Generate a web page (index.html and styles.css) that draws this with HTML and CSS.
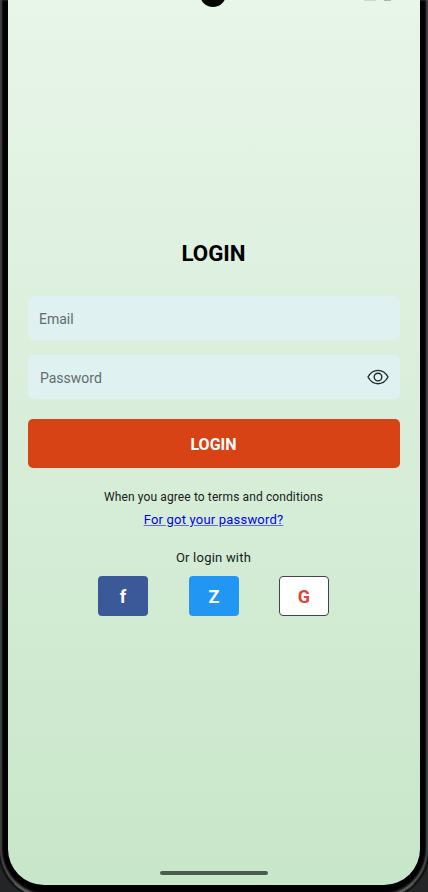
FILE: index.html
```html
<!DOCTYPE html>
<html lang="en">
<head>
<meta charset="utf-8">
<title>Login</title>
<link rel="stylesheet" href="styles.css">
</head>
<body>
<div class="device">
  <div class="bezel">
    <main class="screen">
      <div class="camera"></div>
      <div class="status"><i class="signal"></i><i class="battery"></i></div>
      <h1 class="title">LOGIN</h1>
      <div class="field email"><span>Email</span></div>
      <div class="field">
        <span>Password</span>
        <svg class="eye" viewBox="0 0 22 16" width="22" height="16" fill="none" stroke="#20282a" stroke-width="1.35">
          <path d="M1 8C3.3 3.7 6.8 1.3 11 1.3S18.7 3.7 21 8C18.7 12.3 15.2 14.7 11 14.7S3.3 12.3 1 8Z" stroke-linejoin="round"/>
          <circle cx="11" cy="8" r="3.8"/>
        </svg>
      </div>
      <button class="submit">LOGIN</button>
      <p class="terms">When you agree to terms and conditions</p>
      <a class="forgot">For got your password?</a>
      <p class="or">Or login with</p>
      <div class="social">
        <button class="fb">f</button>
        <button class="zalo">Z</button>
        <button class="google">G</button>
      </div>
      <div class="home"></div>
    </main>
  </div>
</div>
</body>
</html>
```
FILE: styles.css
```css
* { box-sizing: border-box; }
body { margin: 0; font-family: Roboto, sans-serif; background: #202122; }
.device {
  width: 428px;
  height: 892px;
  overflow: hidden;
  background: #242526;
}
.bezel {
  width: 428px;
  height: 898px;
  padding: 0 7px;
  background: #000;
  border: 1px solid #3c3d3e;
  border-top: 0;
  border-bottom-color: #606162;
  border-radius: 0 0 48px 48px;
  box-shadow: 0 0 0 2px #111, inset 0 -2px 3px #77797a, inset 0 0 2px #55585a;
}
.screen {
  position: relative;
  display: flex;
  flex-direction: column;
  width: 412px;
  height: 885px;
  padding: 238px 20px 10px;
  border-radius: 0 0 36px 36px;
  overflow: hidden;
  background: linear-gradient(#e8f5e9, #c8e6c9);
}
.camera {
  position: absolute;
  top: -19px;
  left: 192px;
  width: 26px;
  height: 26px;
  border-radius: 50%;
  background: #050505;
}
.status {
  position: absolute;
  top: 0;
  right: 29px;
  display: flex;
  gap: 8px;
}
.status i { height: 1px; }
.signal { width: 12px; background: #ccd8cd; }
.battery { width: 7px; background: #a9b4ab; }
.title {
  margin: 0 0 28px;
  padding-right: 1px;
  height: 30px;
  font-size: 22.3px;
  line-height: 30px;
  font-weight: 700;
  text-align: center;
  color: #000;
}
.field {
  display: flex;
  align-items: center;
  justify-content: space-between;
  height: 44px;
  margin-bottom: 15px;
  padding: 1px 11px 0 12px;
  border-radius: 6px;
  background: #dff1f1;
  color: #626c6c;
  font-size: 14px;
}
.email { padding: 2px 11px 0; }
.eye { margin-top: -1px; }
button {
  display: block;
  padding: 0;
  border: 0;
  font-family: inherit;
  font-weight: 700;
}
.submit {
  height: 49px;
  margin: 5px 0 20px;
  padding: 2px 1px 0 0;
  border-radius: 5px;
  background: #d84315;
  color: #fff;
  font-size: 16px;
}
p { margin: 0; text-align: center; color: #17201a; }
.terms {
  height: 20px;
  margin-top: -1px;
  padding-right: 1px;
  font-size: 12px;
  line-height: 20px;
  letter-spacing: 0.11px;
}
.forgot {
  height: 20px;
  margin-top: 3px;
  padding-right: 1px;
  font-size: 13px;
  line-height: 20px;
  letter-spacing: 0.2px;
  text-align: center;
  color: #0000f5;
  text-decoration: underline;
  text-decoration-color: #5f6fe0;
}
.or {
  height: 20px;
  margin-top: 18px;
  padding-right: 1px;
  font-size: 13px;
  line-height: 20px;
  letter-spacing: 0.22px;
}
.social {
  display: flex;
  justify-content: center;
  gap: 41px;
  margin-top: 8px;
  padding-right: 1px;
}
.social button {
  width: 50px;
  height: 40px;
  padding-top: 1px;
  border-radius: 4px;
  color: #fff;
  font-size: 18px;
}
.social .fb { background: #3b5998; }
.social .zalo { background: #2196f3; }
.social .google {
  margin-left: -1px;
  background: #fff;
  border: 1px solid #444;
  color: #db4437;
}
.home {
  width: 108px;
  height: 4px;
  margin: auto auto 0;
  border-radius: 2px;
  background: #4d5b4e;
}
```
